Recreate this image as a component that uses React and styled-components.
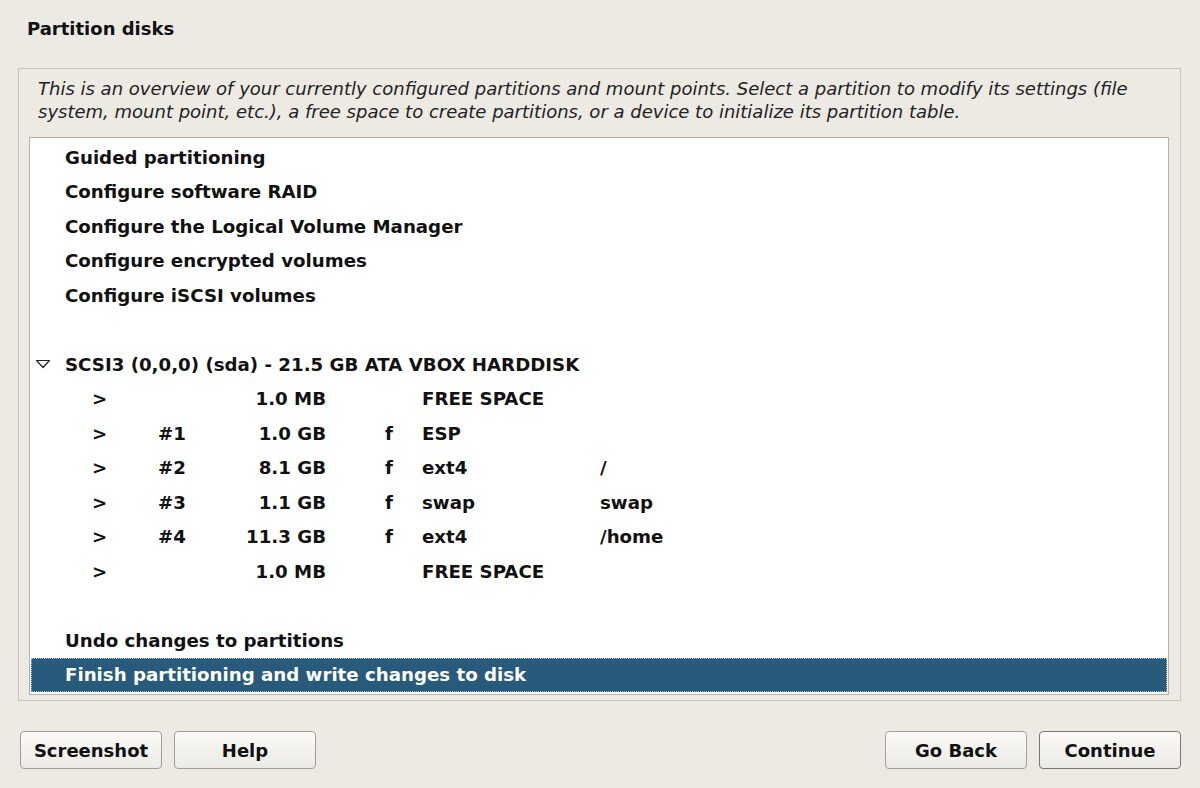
import React from 'react';
import styled, { createGlobalStyle } from 'styled-components';

const GlobalStyle = createGlobalStyle`
    html, body {
        margin: 0;
        padding: 0;
        background: #edeae4;
    }
    body {
        font-family: "DejaVu Sans", "Noto Sans", sans-serif;
        color: #111;
    }
`;

const menuTop = [
    'Guided partitioning',
    'Configure software RAID',
    'Configure the Logical Volume Manager',
    'Configure encrypted volumes',
    'Configure iSCSI volumes'
];

const partitions = [
    { num: '', size: '1.0 MB', flag: '', type: 'FREE SPACE', mount: '' },
    { num: '#1', size: '1.0 GB', flag: 'f', type: 'ESP', mount: '' },
    { num: '#2', size: '8.1 GB', flag: 'f', type: 'ext4', mount: '/' },
    { num: '#3', size: '1.1 GB', flag: 'f', type: 'swap', mount: 'swap' },
    { num: '#4', size: '11.3 GB', flag: 'f', type: 'ext4', mount: '/home' },
    { num: '', size: '1.0 MB', flag: '', type: 'FREE SPACE', mount: '' }
];

const Expander = () => (
    <svg width="16" height="10" viewBox="0 0 16 10">
        <path d="M1.5 1.5 H14.5 L8 8.5 Z" fill="none" stroke="#222" strokeWidth="1.2" strokeLinejoin="round" />
    </svg>
);

const App = () => {
    return (
        <>
            <GlobalStyle />
            <Page>
                <Header>Partition disks</Header>
                <Panel>
                    <Description>
                        This is an overview of your currently configured partitions and mount points. Select a partition to modify its settings (file system, mount point, etc.), a free space to create partitions, or a device to initialize its partition table.
                    </Description>
                    <ListBox>
                        {menuTop.map((label) => (
                            <Row key={label}>{label}</Row>
                        ))}
                        <Row />
                        <Row $indent="4px">
                            <ExpanderWrap>
                                <Expander />
                            </ExpanderWrap>
                            SCSI3 (0,0,0) (sda) - 21.5 GB ATA VBOX HARDDISK
                        </Row>
                        {partitions.map((p, i) => (
                            <PartRow key={i}>
                                <span>&gt;</span>
                                <span>{p.num}</span>
                                <Size>{p.size}</Size>
                                <span />
                                <span>{p.flag}</span>
                                <span>{p.type}</span>
                                <span>{p.mount}</span>
                            </PartRow>
                        ))}
                        <Row />
                        <Row>Undo changes to partitions</Row>
                        <Row $selected>Finish partitioning and write changes to disk</Row>
                    </ListBox>
                </Panel>
                <ButtonBar>
                    <ButtonGroup>
                        <Button>Screenshot</Button>
                        <Button>Help</Button>
                    </ButtonGroup>
                    <ButtonGroup>
                        <Button>Go Back</Button>
                        <Button $default>Continue</Button>
                    </ButtonGroup>
                </ButtonBar>
            </Page>
        </>
    );
};

export default App;

const Page = styled.div`
    width: 1200px;
    height: 788px;
    box-sizing: border-box;
    display: flex;
    flex-direction: column;
    padding: 0 19px 0 18px;
`;

const Header = styled.div`
    font-size: 18px;
    font-weight: 700;
    line-height: 20px;
    padding: 19px 0 0 9px;
    height: 68px;
    box-sizing: border-box;
`;

const Panel = styled.div`
    border: 1px solid #c9c1b5;
    height: 633px;
    box-sizing: border-box;
    padding: 8px 11px 0 10px;
`;

const Description = styled.div`
    font-style: italic;
    font-size: 18px;
    line-height: 23px;
    color: #222;
    padding: 0 10px 0 9px;
    height: 60px;
`;

const ListBox = styled.div`
    background: #fff;
    border: 1px solid #b9b1a5;
    padding: 2px 1px;
    height: 558px;
    box-sizing: border-box;
`;

const Row = styled.div`
    height: 34.5px;
    display: flex;
    align-items: center;
    font-size: 18.2px;
    font-weight: 700;
    padding-left: ${(p) => p.$indent || '34px'};
    box-sizing: border-box;
    white-space: pre;
    background: ${(p) => (p.$selected ? '#285b7b' : 'transparent')};
    color: ${(p) => (p.$selected ? '#fff' : '#111')};
    outline: ${(p) => (p.$selected ? '1px dotted #a9c3d6' : 'none')};
    outline-offset: -1px;
`;

const ExpanderWrap = styled.span`
    display: inline-flex;
    width: 30px;
    align-items: center;
`;

const PartRow = styled.div`
    height: 34.5px;
    display: grid;
    grid-template-columns: 66px 60px 108px 59px 37px 178px 1fr;
    align-items: center;
    font-size: 18.2px;
    font-weight: 700;
    padding-left: 61px;
    color: #111;
`;

const Size = styled.span`
    text-align: right;
`;

const ButtonBar = styled.div`
    display: flex;
    justify-content: space-between;
    padding: 30px 0 0 2px;
`;

const ButtonGroup = styled.div`
    display: flex;
    gap: 12px;
`;

const Button = styled.button`
    width: 142px;
    height: 38px;
    box-sizing: border-box;
    border: 1px solid ${(p) => (p.$default ? '#7d766c' : '#a49d92')};
    border-radius: 4px;
    background: linear-gradient(#fbfaf8, #eceae5);
    font-family: "DejaVu Sans", sans-serif;
    font-size: 18px;
    font-weight: 700;
    color: #111;
    padding: 0;
`;
